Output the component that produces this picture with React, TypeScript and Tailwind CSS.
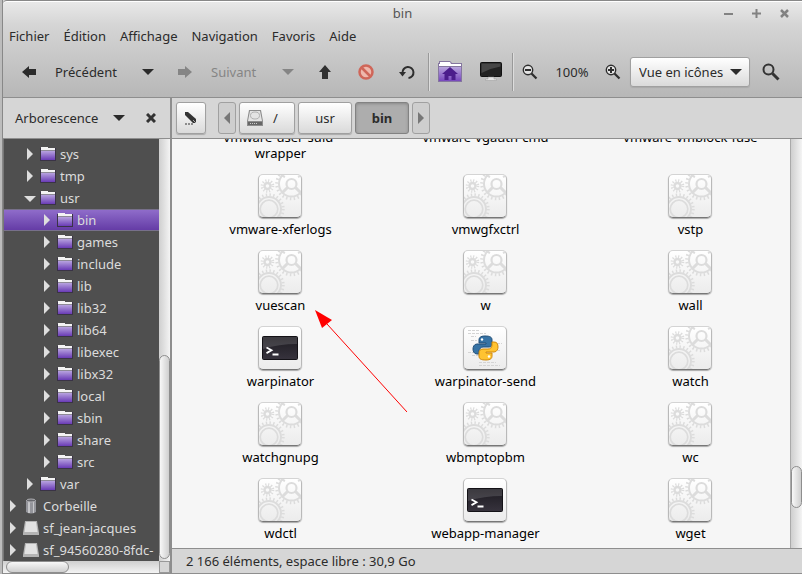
import type { ReactNode } from "react";

type TreeNode = {
  name: string;
  level: number;
  icon: "folder" | "trash" | "drive";
  open?: boolean;
  selected?: boolean;
};

const tree: TreeNode[] = [
  { name: "sys", level: 1, icon: "folder" },
  { name: "tmp", level: 1, icon: "folder" },
  { name: "usr", level: 1, icon: "folder", open: true },
  { name: "bin", level: 2, icon: "folder", selected: true },
  { name: "games", level: 2, icon: "folder" },
  { name: "include", level: 2, icon: "folder" },
  { name: "lib", level: 2, icon: "folder" },
  { name: "lib32", level: 2, icon: "folder" },
  { name: "lib64", level: 2, icon: "folder" },
  { name: "libexec", level: 2, icon: "folder" },
  { name: "libx32", level: 2, icon: "folder" },
  { name: "local", level: 2, icon: "folder" },
  { name: "sbin", level: 2, icon: "folder" },
  { name: "share", level: 2, icon: "folder" },
  { name: "src", level: 2, icon: "folder" },
  { name: "var", level: 1, icon: "folder" },
  { name: "Corbeille", level: 0, icon: "trash" },
  { name: "sf_jean-jacques", level: 0, icon: "drive" },
  { name: "sf_94560280-8fdc-", level: 0, icon: "drive" },
];

const files = [
  { name: "vmware-user-suid-wrapper", type: "exec" },
  { name: "vmware-vgauth-cmd", type: "exec" },
  { name: "vmware-vmblock-fuse", type: "exec" },
  { name: "vmware-xferlogs", type: "exec" },
  { name: "vmwgfxctrl", type: "exec" },
  { name: "vstp", type: "exec" },
  { name: "vuescan", type: "exec" },
  { name: "w", type: "exec" },
  { name: "wall", type: "exec" },
  { name: "warpinator", type: "shell" },
  { name: "warpinator-send", type: "python" },
  { name: "watch", type: "exec" },
  { name: "watchgnupg", type: "exec" },
  { name: "wbmptopbm", type: "exec" },
  { name: "wc", type: "exec" },
  { name: "wdctl", type: "exec" },
  { name: "webapp-manager", type: "shell" },
  { name: "wget", type: "exec" },
];

const menus = ["Fichier", "Édition", "Affichage", "Navigation", "Favoris", "Aide"];

function Caret({ className = "" }: { className?: string }) {
  return (
    <svg viewBox="0 0 12 6" className={"h-1.5 w-3 " + className} fill="currentColor">
      <path d="M0 0h12L6 6z" />
    </svg>
  );
}

function ArrowIcon({ className = "" }: { className?: string }) {
  return (
    <svg viewBox="0 0 14 12" className={"h-3 w-3.5 " + className} fill="currentColor">
      <path d="M0 6 7 0v3h7v6H7v3z" />
    </svg>
  );
}

function Exec() {
  return (
    <svg viewBox="0 0 42 42" className="size-full" fill="none" stroke="#dcdcdc">
      <circle cx="10" cy="34" r="8.8" strokeWidth="1.7" />
      <circle cx="10" cy="34" r="12" strokeWidth="2" />
      <circle cx="10" cy="34" r="14.2" strokeWidth="3" strokeDasharray="1.4 2.32" />
      <circle cx="32.5" cy="9" r="5" strokeWidth="2.2" />
      <circle cx="32.5" cy="9" r="12.5" strokeWidth="2" />
      <circle cx="32.5" cy="9" r="14.8" strokeWidth="3" strokeDasharray="1.5 2.38" />
      <path d="M28.5 12.5 23 18M36.5 12.5 42 18" strokeWidth="3" />
      <path d="M26 2 22 0M39 2l4-2" strokeWidth="2" />
      <circle cx="8.5" cy="11" r="3" strokeWidth="2.4" />
      <circle cx="8.5" cy="11" r="5.4" strokeWidth="2.8" strokeDasharray="1.1 1.727" />
    </svg>
  );
}

function Shell() {
  return (
    <svg viewBox="0 0 42 42" className="size-full">
      <defs>
        <linearGradient id="screen" x1="0" y1="0" x2="0" y2="1">
          <stop offset="0" stopColor="#1c1a20" />
          <stop offset="1" stopColor="#37333d" />
        </linearGradient>
      </defs>
      <rect x="3.5" y="9.5" width="35" height="23" rx="1" fill="url(#screen)" stroke="#141217" />
      <path d="M4 10h34v7Q20 17 4 22z" fill="#fff" opacity="0.14" />
      <path d="m7.5 20.500 5 2.800-5 2.800M13.500 27.500h6" fill="none" stroke="#fff" strokeWidth="1.800" />
    </svg>
  );
}

function Python() {
  return (
    <svg viewBox="0 0 42 42" className="size-full">
      <path
        d="M4 3.500h11M4 6.500h18M7 9.500h5M7 13.500h6M4 25.500h9M8 28.500h9M15 35.500h17M15 38.500h21M33 16.500h5M30 23.500h6"
        stroke="#d4d4d4"
        strokeDasharray="3 1"
      />
      <path
        d="M21 9c-5 0-6 2-6 4v3h7v1H13c-3 0-4 3-4 5s1 5 4 5h2v-3c0-2 2-4 4-4h6c2 0 3-1 3-3v-4c0-3-2-4-7-4z"
        fill="#3773a5"
        stroke="#224f78"
      />
      <path
        d="M22 33c5 0 6-2 6-4v-3h-6v-1h8c3 0 4-3 4-5 0-3-1-5-4-5h-2v3c0 3-2 4-4 4h-5c-3 0-4 2-4 4v3c0 3 2 4 7 4z"
        fill="#ffc331"
        stroke="#d18a0b"
      />
      <circle cx="18" cy="12.500" r="1.200" fill="#fff" />
      <circle cx="25" cy="29.500" r="1.200" fill="#fff" />
    </svg>
  );
}

function FileIcon({ type }: { type: string }) {
  return (
    <span className="block size-[44px] overflow-hidden rounded-[5px] border border-[#b9b9b9] border-t-[#d4d4d4] border-b-[#777] bg-linear-to-b from-white to-[#ececec] shadow-[0_1px_1px_#aaa]">
      {type === "exec" && <Exec />}
      {type === "shell" && <Shell />}
      {type === "python" && <Python />}
    </span>
  );
}

function TreeIcon({ icon }: { icon: TreeNode["icon"] }) {
  if (icon === "trash") {
    return (
      <svg viewBox="0 0 16 16" className="size-4 shrink-0">
        <path d="M3 2h10v12q-5 3-10 0z" fill="#94959b" />
        <path d="M5 3h2v12H5zM10 3h1v12h-1z" fill="#c6c7ca" />
        <ellipse cx="8" cy="2.500" rx="4.500" ry="1.500" fill="#66676c" stroke="#b0b0b4" />
      </svg>
    );
  }
  if (icon === "drive") {
    return (
      <svg viewBox="0 0 16 16" className="size-4 shrink-0">
        <path d="M2 1h12l2 12v2H0v-2z" fill="#b4b4b4" />
        <path d="M3 2h10l1.500 10h-13z" fill="#e2e2e2" />
      </svg>
    );
  }
  return (
    <svg viewBox="0 0 16 16" className="size-4 shrink-0">
      <defs>
        <linearGradient id="folder" x1="0" y1="0" x2="0" y2="1">
          <stop offset="0" stopColor="#b7a3df" />
          <stop offset="1" stopColor="#6a3bb6" />
        </linearGradient>
      </defs>
      <path d="M0 2h1V1h7v1h8v13H0z" fill="#3a3346" />
      <path d="M1 1h7v1h7v2H1z" fill="#f4f4f4" />
      <path d="M1 4h14v1H1z" fill="#8d8996" />
      <path d="M1 5h14v9H1z" fill="url(#folder)" />
    </svg>
  );
}

function ToolButton({ label, className = "", children }: { label: string; className?: string; children: ReactNode }) {
  return (
    <button aria-label={label} className={"flex h-8 shrink-0 items-center justify-center " + className}>
      {children}
    </button>
  );
}

const raised = "border border-[#a0a0a0] bg-linear-to-b from-white to-[#dadada] shadow-[0_1px_1px_#aaa]";

function Toolbar() {
  return (
    <div className="flex h-[50px] items-center">
      <button className="ml-[19px] flex h-8 items-center gap-[19px]">
        <ArrowIcon />
        <span className="w-[62px] text-left">Précédent</span>
      </button>
      <ToolButton label="Historique précédent" className="ml-[19px] w-6">
        <Caret />
      </ToolButton>
      <button className="ml-[18px] flex h-8 items-center gap-[19px] text-[#858585]">
        <ArrowIcon className="rotate-180" />
        <span className="w-[46px] text-left">Suivant</span>
      </button>
      <ToolButton label="Historique suivant" className="ml-[19px] w-6 text-[#858585]">
        <Caret />
      </ToolButton>
      <ToolButton label="Dossier parent" className="ml-[9px] w-8">
        <svg viewBox="0 0 12 14" className="h-3.5 w-3" fill="#303030">
          <path d="m6 0 6 7H9v7H3V7H0z" />
        </svg>
      </ToolButton>
      <ToolButton label="Arrêter" className="ml-[9px] w-8">
        <svg viewBox="0 0 16 16" className="size-4" fill="#eeb8ad" stroke="#cf6659" strokeWidth="2.5">
          <circle cx="8" cy="8" r="6.5" />
          <path d="m4 4 8 8" />
        </svg>
      </ToolButton>
      <ToolButton label="Actualiser" className="ml-[9px] w-8">
        <svg viewBox="0 0 16 16" className="size-4" fill="none" stroke="#2e2e2e" strokeWidth="2">
          <path d="M3.5 9a5.500 5.500 0 1 1 6 5" />
          <path d="M0 8h7l-3.500 4.500z" fill="#2e2e2e" stroke="none" />
        </svg>
      </ToolButton>
      <span className="ml-[5px] h-[38px] w-[2px] border-r border-[#ddd] bg-[#999]" />
      <ToolButton label="Dossier personnel" className="ml-[4px] w-8">
        <svg viewBox="0 0 24 22" className="h-[22px] w-6 shrink-0">
          <defs>
            <linearGradient id="home" x1="0" y1="0" x2="0" y2="1">
              <stop offset="0" stopColor="#b8a5dd" />
              <stop offset="1" stopColor="#7747bd" />
            </linearGradient>
          </defs>
          <path d="M0 2h1V0h11l2 2h10v19H0z" fill="#85769f" />
          <path d="M1 3h1V1h10l1 2h10v2H1z" fill="#fff" />
          <path d="M1 6h22v14H1z" fill="url(#home)" />
          <path d="m12 6 8 7h-2.500v6h-4v-4h-3v4h-4v-6H4z" fill="#4b1d8c" />
        </svg>
      </ToolButton>
      <ToolButton label="Poste de travail" className="ml-[9px] w-8">
        <svg viewBox="0 0 22 20" className="h-5 w-[22px] shrink-0">
          <rect x="0.5" y="0.5" width="21" height="14" rx="1" fill="#222" stroke="#111" />
          <path d="M1.500 1.500h19v3Q11 6 1.500 11z" fill="#464646" />
          <path d="M8 15h6v2h2.500v1.500h-11V17H8z" fill="#e4e4e4" stroke="#999" strokeWidth="0.5" />
        </svg>
      </ToolButton>
      <span className="ml-[5px] h-[38px] w-[2px] border-r border-[#ddd] bg-[#999]" />
      <ToolButton label="Zoom arrière" className="ml-[4px] w-6">
        <ZoomIcon />
      </ToolButton>
      <span className="ml-[6px] w-[48px] text-center">100%</span>
      <ToolButton label="Zoom avant" className="ml-[5px] w-6">
        <ZoomIcon plus />
      </ToolButton>
      <div className="relative ml-[5px] h-[30px] w-[120px] shrink-0">
        <select
          aria-label="Type de vue"
          className={"h-[30px] w-full appearance-none rounded-[3px] pl-2 text-[13px] text-[#2b2b2b] " + raised}
        >
          <option>Vue en icônes</option>
          <option>Vue en liste</option>
        </select>
        <Caret className="pointer-events-none absolute top-3 right-2" />
      </div>
      <ToolButton label="Rechercher" className="ml-[5px] w-8">
        <svg viewBox="0 0 18 18" className="size-[18px]" fill="none" stroke="#333">
          <circle cx="6.5" cy="6.5" r="5" strokeWidth="2" />
          <path d="m10.500 10.500 6 6" strokeWidth="3" />
        </svg>
      </ToolButton>
    </div>
  );
}

function ZoomIcon({ plus = false }: { plus?: boolean }) {
  return (
    <svg viewBox="0 0 16 16" className="size-4" fill="none" stroke="#2e2e2e">
      <circle cx="6" cy="6" r="4.7" strokeWidth="1.4" fill="#e4e4e4" />
      <path d={plus ? "M3 6h6M6 3v6" : "M3 6h6"} strokeWidth="2" />
      <path d="m9.500 9.500 5 5" strokeWidth="2.2" />
    </svg>
  );
}

function Sidebar() {
  return (
    <aside className="flex w-[169px] shrink-0 flex-col border-r-2 border-[#8e8e8e]">
      <div className="flex h-[41px] shrink-0 items-center border-b border-[#8e8e8e] pl-3">
        <button className="flex items-center gap-[16px]">
          <span className="w-[82px] text-left">Arborescence</span>
          <Caret />
        </button>
        <button aria-label="Fermer le panneau" className="ml-[21px]">
          <svg viewBox="0 0 10 10" className="size-2.5" stroke="#333" strokeWidth="3">
            <path d="m1 1 8 8M9 1 1 9" />
          </svg>
        </button>
      </div>
      <div className="flex min-h-0 flex-1">
        <ul className="min-w-0 flex-1 overflow-hidden border-l border-[#777] bg-[#4f4f4f] pt-1 text-[#dcdcdc]">
          {tree.map((node) => (
            <li
              key={node.name}
              className={
                "flex h-[22px] items-center gap-[5px] whitespace-nowrap " +
                (node.level === 2 ? "pl-[38px] " : node.level === 1 ? "pl-[21px] " : "pl-[4px] ") +
                (node.selected ? "border-y border-[#77708a] bg-linear-to-b from-[#8f6cca] to-[#653ca6]" : "")
              }
            >
              <svg viewBox="0 0 10 12" className="h-3 w-2.5 shrink-0 overflow-visible" fill="#dedede">
                <path d={node.open ? "M-1 4h12L5 10z" : "M2 0v12l6-6z"} />
              </svg>
              <TreeIcon icon={node.icon} />
              <span className="-ml-px">{node.name}</span>
            </li>
          ))}
        </ul>
        <div className="flex w-[11px] flex-col justify-end bg-linear-to-r from-[#cfcfcf] to-[#f4f4f4] pb-[2px]">
          <div className="h-[204px] rounded-full border border-[#8e8e8e] bg-linear-to-r from-[#f8f8f8] to-[#cfcfcf]" />
        </div>
      </div>
      <div className="flex h-[13px] shrink-0 border-b border-[#8e8e8e]">
        <div className="flex-1 bg-linear-to-b from-[#cfcfcf] to-[#f4f4f4] pl-[3px]">
          <div className="h-[12px] w-[63px] rounded-full border border-[#8e8e8e] bg-linear-to-b from-[#f8f8f8] to-[#cfcfcf]" />
        </div>
        <div className="w-[11px] border border-[#999] bg-[#d6d6d6]" />
      </div>
    </aside>
  );
}

function PathBar() {
  return (
    <nav className="flex h-[41px] shrink-0 items-center border-b border-[#8e8e8e] pl-[4px]">
      <ToolButton label="Modifier le chemin" className={"w-[30px] rounded-[3px] " + raised}>
        <svg viewBox="0 0 14 14" className="size-3.5">
          <path d="M1 1h3l8 7v4H9L1 4z" fill="#333" />
          <path d="m9 9 3 3" stroke="#aaa" />
          <path d="M1 13h2M4 13h2M7 13h2" stroke="#333" />
        </svg>
      </ToolButton>
      <ToolButton label="Défiler à gauche" className="ml-[12px] w-[18px] rounded-[3px] border border-[#a0a0a0] bg-[#cecece]">
        <svg viewBox="0 0 6 12" className="h-3 w-1.5" fill="#777">
          <path d="M6 0v12L0 6z" />
        </svg>
      </ToolButton>
      <button className={"ml-[3px] flex h-8 w-[56px] items-center gap-[10px] rounded-[3px] pl-[7px] " + raised}>
        <svg viewBox="0 0 16 16" className="size-4">
          <path d="M2 0h12l2 11v5H0v-5z" fill="#8d8d8d" />
          <path d="M3 1h10l2 10H1z" fill="#e4e4e4" />
          <ellipse cx="8" cy="5.500" rx="4.500" ry="3.500" fill="none" stroke="#b2b2b2" />
          <path d="M1 12h14v3H1z" fill="#666" />
          <path d="M3 13.500h8" stroke="#ccc" strokeDasharray="1 1" />
        </svg>
        <span>/</span>
      </button>
      <button className={"ml-[3px] h-8 w-[54px] rounded-[3px] " + raised}>usr</button>
      <button className="ml-[3px] h-8 w-[54px] rounded-[3px] border border-[#828282] bg-[#adadad] font-bold shadow-[inset_0_1px_3px_#888]">
        bin
      </button>
      <ToolButton label="Défiler à droite" className="ml-[3px] w-[18px] rounded-[3px] border border-[#a0a0a0] bg-[#cecece]">
        <svg viewBox="0 0 6 12" className="h-3 w-1.5" fill="#777">
          <path d="M0 0v12l6-6z" />
        </svg>
      </ToolButton>
    </nav>
  );
}

export default function App() {
  return (
    <div className="flex h-screen overflow-hidden bg-[#d6d6d6] font-['Noto_Sans',sans-serif] text-[13px] leading-4 text-[#2b2b2b]">
      <div className="w-[3px] shrink-0 border-r border-[#888] bg-[#bcbcbc]" />
      <div className="flex min-w-0 flex-1 flex-col">
        <header className="h-[98px] shrink-0 rounded-tl-[4px] border-t border-b border-t-[#888] border-b-[#8e8e8e] bg-linear-to-b from-[#e9e9e9] via-[#d5d5d5] via-25% to-[#b7b7b7] shadow-[inset_0_1px_0_#fff]">
          <div className="flex h-6 items-center">
            <h1 className="flex-1 pl-[78px] text-center text-[#555]">bin</h1>
            <div className="flex gap-[19px] pr-[13px] text-[#828282]">
              <button aria-label="Réduire">
                <svg viewBox="0 0 9 9" className="size-[9px]" stroke="currentColor" strokeWidth="2">
                  <path d="M0 5h9" />
                </svg>
              </button>
              <button aria-label="Agrandir">
                <svg viewBox="0 0 9 9" className="size-[9px]" stroke="currentColor" strokeWidth="2">
                  <path d="M0 4.500h9M4.500 0v9" />
                </svg>
              </button>
              <button aria-label="Fermer">
                <svg viewBox="0 0 9 9" className="size-[9px]" stroke="currentColor" strokeWidth="2.5">
                  <path d="m1 1 7 7M8 1 1 8" />
                </svg>
              </button>
            </div>
          </div>
          <div className="flex h-[22px] items-center gap-[14px] pl-[6px]">
            {menus.map((menu) => (
              <button key={menu}>{menu}</button>
            ))}
          </div>
          <Toolbar />
        </header>
        <div className="flex min-h-0 flex-1">
          <Sidebar />
          <div className="flex min-w-0 flex-1 flex-col">
            <PathBar />
            <main className="relative flex min-h-0 flex-1 overflow-hidden bg-[#f6f6f6]">
              <ul className="-mt-[57px] -mr-1 grid min-w-0 flex-1 grid-cols-[repeat(auto-fill,205px)] content-start pl-[5px] text-black">
                {files.map((file) => (
                  <li key={file.name} className="flex flex-col items-center gap-[3px] pb-[13px]">
                    <FileIcon type={file.type} />
                    <span className="max-w-[140px] pl-[2px] text-center">{file.name}</span>
                  </li>
                ))}
              </ul>
              <div className="z-10 flex w-3 flex-col justify-end border-l border-[#aaa] bg-linear-to-r from-[#cfcfcf] to-[#f4f4f4] pb-[40px]">
                <div className="h-[42px] rounded-full border border-[#8e8e8e] bg-linear-to-r from-[#f8f8f8] to-[#cfcfcf]" />
              </div>
              <svg viewBox="0 0 92 102" className="absolute top-[171px] left-[143px] h-[102px] w-[92px]">
                <path d="M12 14 92 102" stroke="#f00" />
                <path d="m0 0 7 18 10-8z" fill="#f00" />
              </svg>
            </main>
            <footer className="flex h-[26px] shrink-0 items-center border-y border-[#8e8e8e] pl-[14px]">
              2 166 éléments, espace libre : 30,9 Go
            </footer>
          </div>
        </div>
      </div>
    </div>
  );
}
